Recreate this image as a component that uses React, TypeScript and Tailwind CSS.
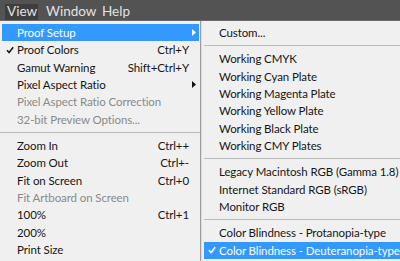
import React from 'react';

type Item =
  | { sep: true }
  | {
      sep?: false;
      label: string;
      shortcut?: string;
      disabled?: boolean;
      checked?: boolean;
      active?: boolean;
      submenu?: boolean;
    };

const viewItems: Item[] = [
  { label: 'Proof Setup', submenu: true, active: true },
  { label: 'Proof Colors', shortcut: 'Ctrl+Y', checked: true },
  { label: 'Gamut Warning', shortcut: 'Shift+Ctrl+Y' },
  { label: 'Pixel Aspect Ratio', submenu: true },
  { label: 'Pixel Aspect Ratio Correction', disabled: true },
  { label: '32-bit Preview Options...', disabled: true },
  { sep: true },
  { label: 'Zoom In', shortcut: 'Ctrl++' },
  { label: 'Zoom Out', shortcut: 'Ctrl+-' },
  { label: 'Fit on Screen', shortcut: 'Ctrl+0' },
  { label: 'Fit Artboard on Screen', disabled: true },
  { label: '100%', shortcut: 'Ctrl+1' },
  { label: '200%' },
  { label: 'Print Size' },
];

const proofItems: Item[] = [
  { label: 'Custom...' },
  { sep: true },
  { label: 'Working CMYK' },
  { label: 'Working Cyan Plate' },
  { label: 'Working Magenta Plate' },
  { label: 'Working Yellow Plate' },
  { label: 'Working Black Plate' },
  { label: 'Working CMY Plates' },
  { sep: true },
  { label: 'Legacy Macintosh RGB (Gamma 1.8)' },
  { label: 'Internet Standard RGB (sRGB)' },
  { label: 'Monitor RGB' },
  { sep: true },
  { label: 'Color Blindness - Protanopia-type' },
  { label: 'Color Blindness - Deuteranopia-type', checked: true, active: true },
];

const Check = ({ color }: { color: string }) => (
  <svg width="8" height="8" viewBox="0 0 8 8" className="shrink-0">
    <path d="M1 4.3 L3.1 6.6 L7.2 1.2" fill="none" stroke={color} strokeWidth="1.6" />
  </svg>
);

const Arrow = ({ color }: { color: string }) => (
  <svg width="4" height="7" viewBox="0 0 4 7">
    <polygon points="0,0 4,3.5 0,7" fill={color} />
  </svg>
);

const MenuRows = ({ items, right }: { items: Item[]; right?: boolean }) => (
  <div className="flex flex-col pt-[3px]">
    {items.map((it, i) => {
      if (it.sep) {
        return (
          <div key={i} className="h-[9px] flex items-center">
            <div className={`w-full h-px bg-[#b9b9b9] ${right ? 'ml-[2px]' : ''}`} />
          </div>
        );
      }
      const fg = it.active ? 'text-white' : it.disabled ? 'text-[#8a8a8a]' : 'text-[#161616]';
      return (
        <div
          key={i}
          className={`relative h-[17.33px] flex items-center pl-[15px] ${right ? 'mx-[2px]' : 'ml-[2px] mr-px'} ${
            it.active ? 'bg-[#3399ff]' : ''
          } ${fg}`}
        >
          <div className="absolute top-0 bottom-0 left-[4px] flex items-center">
            {it.checked && <Check color={it.active ? '#ffffff' : '#1a1a1a'} />}
          </div>
          <span className="whitespace-nowrap">{it.label}</span>
          {it.shortcut && <span className="ml-auto whitespace-nowrap pr-[10px]">{it.shortcut}</span>}
          {it.submenu && (
            <div className="absolute right-[3px] top-0 bottom-0 flex items-center">
              <Arrow color={it.active ? '#ffffff' : '#111111'} />
            </div>
          )}
        </div>
      );
    })}
  </div>
);

export default function App() {
  return (
    <div
      className="w-[400px] h-[261px] overflow-hidden bg-[#f0f0f0] text-[11.5px] tracking-[-0.1px] leading-none"
      style={{ fontFamily: 'Lato, "Noto Sans", Arial, sans-serif' }}
    >
      <div className="h-[21px] bg-[#535353] border-b border-[#6a6a6a] flex items-end pl-[5px] text-[#e2e2e2] text-[13.5px] tracking-normal">
        <div className="h-[16px] pl-[2px] bg-[#3e3e3e] flex items-center w-[33px]">View</div>
        <div className="h-[16px] pl-[8px] w-[64px] flex items-center">Window</div>
        <div className="h-[16px] flex items-center">Help</div>
      </div>
      <div className="flex h-[240px]">
        <div className="w-[201px] border-r border-[#9c9c9c] shrink-0">
          <MenuRows items={viewItems} />
        </div>
        <div className="flex-1 border-l border-[#dcdcdc] border-r border-r-[#9c9c9c]">
          <MenuRows items={proofItems} right />
        </div>
      </div>
    </div>
  );
}
